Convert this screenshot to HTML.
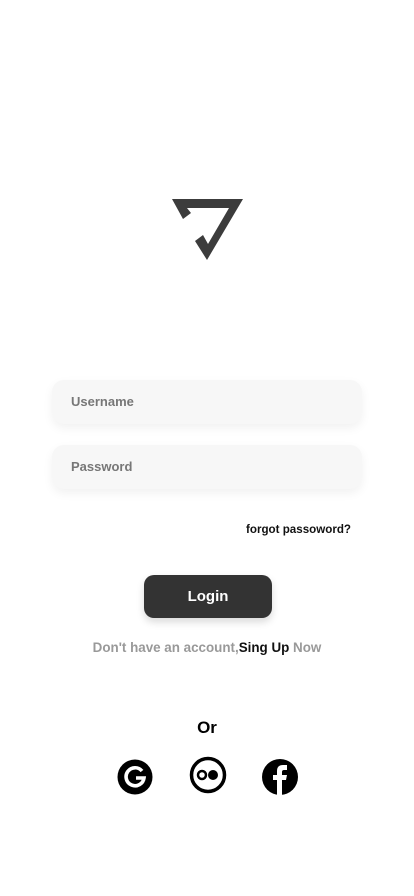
<!DOCTYPE html>
<html><head><meta charset="utf-8"><style>
body{margin:0;width:414px;height:896px;background:#fff;font-family:"Liberation Sans",Arial,sans-serif;position:relative;overflow:hidden}
.in{position:absolute;left:52px;width:310px;height:44px;background:#f7f7f7;border-radius:12px;box-shadow:0 4px 10px rgba(0,0,0,0.06);font-size:13px;font-weight:bold;color:#777;line-height:44px;box-sizing:border-box;padding-left:19px}
.t{position:absolute;white-space:nowrap}
</style></head><body>
<svg width="414" height="300" style="position:absolute;left:0;top:0">
<polygon fill="#3c3c3c" points="172,199 243,199 207,260 195,241 203,235 208,244 229,208 187,208 191,213 183,219"/>
</svg>
<div class="in" style="top:380px">Username</div>
<div class="in" style="top:445px">Password</div>
<div class="t" style="right:63px;top:523px;font-size:11.6px;font-weight:bold;color:#111">forgot passoword?</div>
<div style="position:absolute;left:144px;top:575px;width:128px;height:43px;background:#333;border-radius:10px;color:#fff;font-weight:bold;font-size:15px;text-align:center;line-height:43px;box-shadow:0 4px 8px rgba(0,0,0,0.15)">Login</div>
<div class="t" style="left:0;width:414px;text-align:center;top:640px;font-size:13.4px;color:#999;font-weight:bold">Don't have an account,<span style="color:#111">Sing Up</span> Now</div>
<div class="t" style="left:0;width:414px;text-align:center;top:718px;font-size:17px;font-weight:bold;color:#000">Or</div>
<svg width="414" height="60" style="position:absolute;left:0;top:750px">
<circle cx="135" cy="27" r="17.5" fill="#000"/>
<path d="M142 21 A9 9 0 1 0 144 28 L136 28" fill="none" stroke="#fff" stroke-width="3.6"/>
<circle cx="208" cy="25" r="16.5" fill="none" stroke="#000" stroke-width="3.5"/>
<circle cx="202" cy="25" r="4" fill="none" stroke="#000" stroke-width="2.5"/>
<circle cx="213" cy="25" r="5" fill="#000"/>
<circle cx="280" cy="27" r="18" fill="#000"/>
<path d="M277 46 V30 H273 V25 H277 V21 Q277 15 283 15 H287 V20 H284 Q282 20 282 22 V25 H287 L286 30 H282 V46 Z" fill="#fff"/>
</svg>
</body></html>
